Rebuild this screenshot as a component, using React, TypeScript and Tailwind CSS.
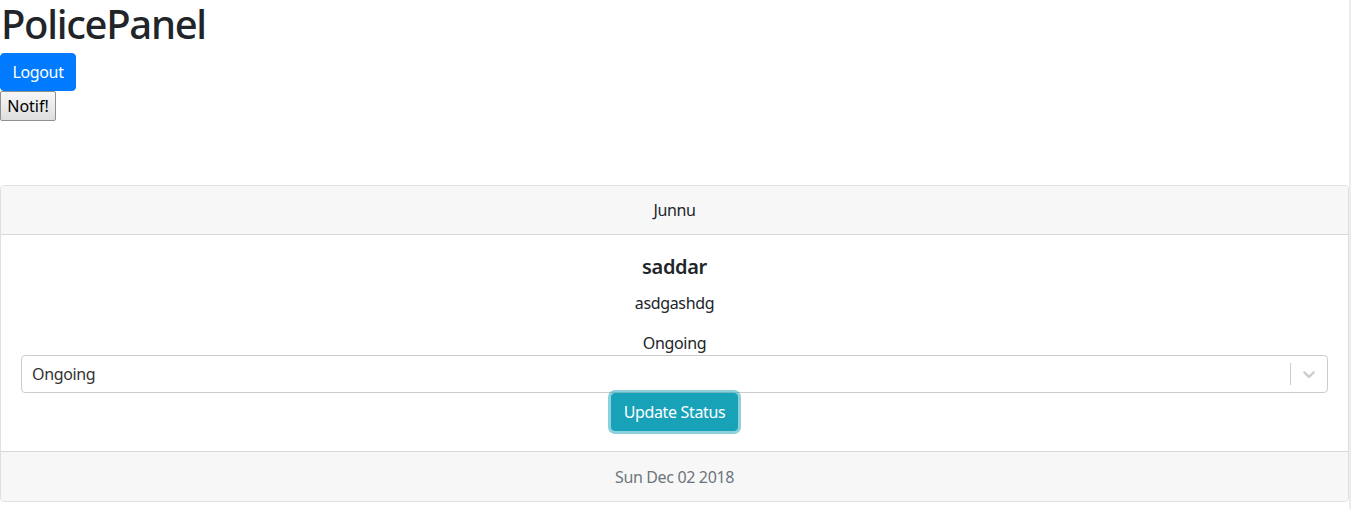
import React from "react";

export default function App() {
  const font = { fontFamily: '"Noto Sans", "Open Sans", sans-serif' };
  return (
    <div className="flex w-[1351px] min-h-[509px] bg-white text-[#212529] tracking-[-0.35px]" style={font}>
      <div className="w-[1349px]">
        <h1 className="text-[40px] leading-[48px] font-medium m-0 mb-[5px] pl-px tracking-[-1.3px]">PolicePanel</h1>
        <button className="h-[38px] w-[76px] bg-[#007bff] text-white text-[16px] leading-[24px] rounded-[4px] border border-[#007bff]">
          Logout
        </button>
        <div>
          <button className="h-[30px] w-[56px] text-[16px] leading-[20px] tracking-normal text-black font-normal border border-[#8f8f8f] rounded-[2px] bg-gradient-to-b from-[#f7f7f7] to-[#dedede]">
            Notif!
          </button>
        </div>
        <div className="mt-[64px] border border-[rgba(0,0,0,0.125)] rounded-[4px] overflow-hidden">
          <div className="h-[49px] bg-[#f7f7f7] border-b border-[rgba(0,0,0,0.125)] flex items-center justify-center text-[16px]">
            Junnu
          </div>
          <div className="p-[20px] text-center">
            <h5 className="text-[20px] leading-[24px] font-semibold mb-[12px]">saddar</h5>
            <p className="text-[16px] leading-[24px] mb-[16px]">asdgashdg</p>
            <p className="text-[16px] leading-[24px]">Ongoing</p>
            <div className="h-[38px] border border-[#cccccc] rounded-[4px] flex items-center text-left">
              <div className="flex-1 pl-[10px] text-[16px] text-[#333333]">Ongoing</div>
              <div className="w-px h-[22px] bg-[#cccccc]"></div>
              <div className="w-[36px] flex items-center justify-center">
                <svg width="20" height="20" viewBox="0 0 20 20" fill="#cccccc">
                  <path d="M4.516 7.548c0.436-0.446 1.043-0.481 1.576 0l3.908 3.747 3.908-3.747c0.533-0.481 1.141-0.446 1.574 0 0.436 0.445 0.408 1.197 0 1.615-0.406 0.418-4.695 4.502-4.695 4.502-0.217 0.223-0.502 0.335-0.787 0.335s-0.57-0.112-0.789-0.335c0 0-4.287-4.084-4.695-4.502s-0.436-1.170 0-1.615z" />
                </svg>
              </div>
            </div>
            <button className="h-[38px] px-[12px] bg-[#17a2b8] text-white text-[16px] leading-[24px] rounded-[4px] border border-[#17a2b8] shadow-[0_0_0_3px_rgba(23,162,184,0.5)]">
              Update Status
            </button>
          </div>
          <div className="h-[50px] bg-[#f7f7f7] border-t border-[rgba(0,0,0,0.125)] flex items-center justify-center text-[16px] text-[#6c757d]">
            Sun Dec 02 2018
          </div>
        </div>
      </div>
      <div className="w-[2px] bg-[#ececec]"></div>
    </div>
  );
}
